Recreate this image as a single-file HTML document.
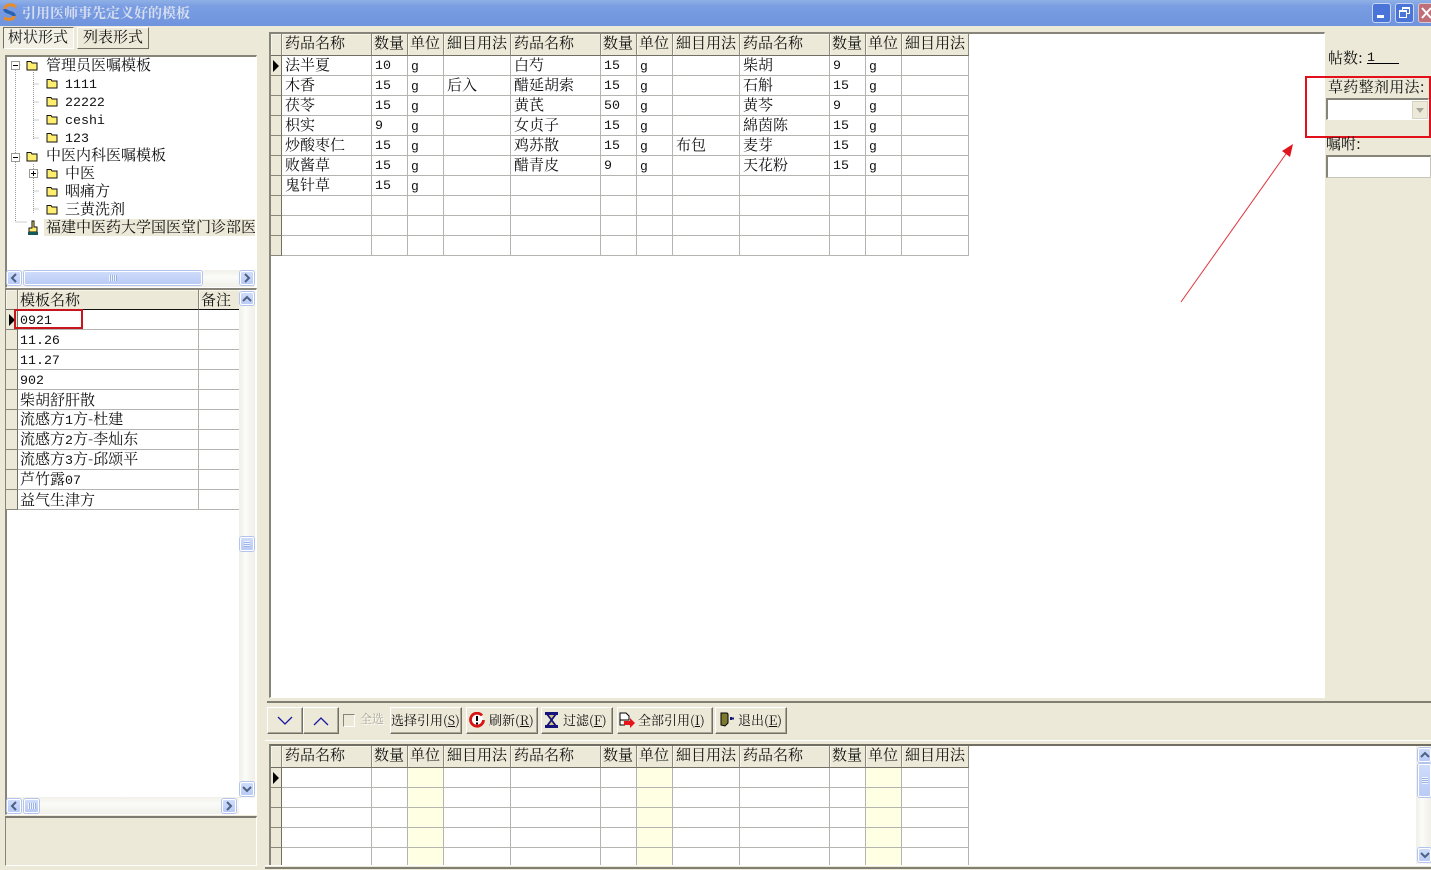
<!DOCTYPE html>
<html lang="zh-CN"><head><meta charset="utf-8"><title>引用医师事先定义好的模板</title>
<style>
html,body{margin:0;padding:0}
body{width:1431px;height:870px;position:relative;overflow:hidden;background:#ece9d8;font:15px/20px "Noto Serif CJK SC","Liberation Serif",serif;color:#111}
.a{position:absolute;box-sizing:border-box}
.t{position:absolute;white-space:nowrap}
.n{font:13.3px/20px "Liberation Mono",monospace}
.white{background:#fff}
.sunk{border-top:2px solid #87847a;border-left:2px solid #87847a;border-right:1px solid #fff;border-bottom:1px solid #fff}
.btn{position:absolute;box-sizing:border-box;background:#ece9d8;border:1px solid;border-color:#fff #716f64 #716f64 #fff;box-shadow:inset -1px -1px 0 #aca899;white-space:nowrap;font-size:13px;line-height:23px}
.sb{position:absolute;box-sizing:border-box;background:linear-gradient(#cfdcfb,#b9cbf6);border:1px solid #fff;border-radius:2px;box-shadow:0 0 0 1px #b2c4ee;color:#4d6185}
.sb svg{position:absolute;left:0;top:0}
.tr{position:absolute;background:linear-gradient(90deg,#f0efe8,#fbfbf8 40%,#f0efe8)}
.trh{position:absolute;background:linear-gradient(#f1f0ea,#fbfbf8 40%,#f1f0ea)}
table{position:absolute;border-collapse:separate;border-spacing:0;table-layout:fixed}
td,th{box-sizing:border-box;height:20px;padding:0 0 0 3px;font-weight:400;text-align:left;border-right:1px solid #b4b4b0;border-bottom:1px solid #b4b4b0;overflow:hidden;white-space:nowrap;line-height:14px;vertical-align:middle}
th{height:21px;padding-bottom:2px;background:#ece9d8;border-right-color:#8a887c;border-bottom:1px solid #716f64;box-shadow:inset 1px 1px 0 #f8f6ea}
.b th{padding-bottom:3px}
.m th{height:22px;padding-bottom:4px}
.m td{padding-bottom:2px}
.m td.i{padding-bottom:0}
td.i{background:#ece9d8;border-right:1px solid #716f64;border-bottom:1px solid #8a887c;padding:0}
td.y{background:#ffffe3}
td .n{line-height:12px}
.arrow{display:block;margin-left:2px;width:0;height:0;border-left:6px solid #000;border-top:6px solid transparent;border-bottom:6px solid transparent}
.g{position:relative;top:0;font:13px/10px "Liberation Mono",monospace}
</style></head><body>
<svg width="0" height="0" style="position:absolute"><defs>
<symbol id="f" viewBox="0 0 12 11"><path d="M1 3V1.500h4L6 3h5v7H1z" fill="#ffee70" stroke="#111" stroke-width="1"/></symbol>
<symbol id="up" viewBox="0 0 14 14"><path d="M3 9l4-4 4 4" fill="none" stroke="#4d6185" stroke-width="2"/></symbol>
<symbol id="dn" viewBox="0 0 14 14"><path d="M3 5l4 4 4-4" fill="none" stroke="#4d6185" stroke-width="2"/></symbol>
<symbol id="lf" viewBox="0 0 14 14"><path d="M9 3L5 7l4 4" fill="none" stroke="#4d6185" stroke-width="2"/></symbol>
<symbol id="rt" viewBox="0 0 14 14"><path d="M5 3l4 4-4 4" fill="none" stroke="#4d6185" stroke-width="2"/></symbol>
</defs></svg>

<!-- Title bar -->
<div class="a" style="left:0;top:0;width:1431px;height:26px;background:linear-gradient(#8fb0e6,#7a9de2 25%,#6f94de)"></div>
<svg class="a" style="left:2px;top:3px" width="16" height="18" viewBox="0 0 16 18"><path d="M14 4C9 0 3 2 3 6" fill="none" stroke="#e88b2a" stroke-width="3"/><path d="M3 6c0 4 9 3 9 7" fill="none" stroke="#2a62b0" stroke-width="3.500"/><path d="M12 13c0 4-6 4-10 2" fill="none" stroke="#e88b2a" stroke-width="3"/></svg>
<div class="t" style="left:22px;top:2px;font-size:14px;font-weight:700;color:#d6def0;line-height:22px;letter-spacing:0">引用医师事先定义好的模板</div>
<div class="a" style="left:1372px;top:3px;width:19px;height:20px;background:#4a74d8;border:1px solid #c8d6f2;border-radius:3px"><div class="a" style="left:4px;top:11px;width:7px;height:3px;background:#fff"></div></div>
<div class="a" style="left:1395px;top:3px;width:19px;height:20px;background:#4a74d8;border:1px solid #c8d6f2;border-radius:3px"><div class="a" style="left:6px;top:3px;width:8px;height:7px;border:1px solid #fff;border-top-width:2px"></div><div class="a" style="left:3px;top:6px;width:8px;height:8px;border:1px solid #fff;border-top-width:2px;background:#4a74d8"></div></div>
<div class="a" style="left:1418px;top:3px;width:14px;height:20px;background:#bf6f78;border:1px solid #d8c6d2;border-radius:3px 0 0 3px"><svg class="a" style="left:2px;top:3px" width="12" height="12"><path d="M1 1l9 10M10 1L1 11" stroke="#fff" stroke-width="2"/></svg></div>

<!-- Tabs -->
<div class="a" style="left:3px;top:27px;width:71px;height:22px;border:1px solid;border-color:#716f64 #fff #fff #716f64;background:#f3f1e6"></div>
<div class="t" style="left:8px;top:27px">树状形式</div>
<div class="a" style="left:77px;top:27px;width:72px;height:22px;border:1px solid;border-color:#fff #716f64 #716f64 #fff"></div>
<div class="t" style="left:83px;top:27px">列表形式</div>

<!-- Tree panel -->
<div class="a white sunk" style="left:5px;top:55px;width:252px;height:233px"></div>
<svg class="a" style="left:10px;top:60px" width="60" height="175">
<path d="M5.500 10v152M5.500 162h12M5.500 5h6M5.500 97h6M23.500 12v67M23.500 24h6M23.500 42h6M23.500 60h6M23.500 78h6M23.500 104v49M23.500 113h6M23.500 131h6M23.500 149h6" stroke="#999" stroke-dasharray="1 1" fill="none"/>
<g fill="#fff" stroke="#9a9a92"><rect x="1.500" y="1.500" width="8" height="8"/><rect x="1.500" y="93.500" width="8" height="8"/><rect x="19.500" y="109.500" width="8" height="8"/></g>
<path d="M3 5.500h5M3 97.500h5M21 113.500h5M23.500 111v5" stroke="#000"/>
</svg>
<svg class="a" style="left:26px;top:60px" width="12" height="11"><use href="#f"/></svg>
<div class="t" style="left:46px;top:55px">管理员医嘱模板</div>
<svg class="a" style="left:46px;top:78px" width="12" height="11"><use href="#f"/></svg><div class="t n" style="left:65px;top:75px">1111</div>
<svg class="a" style="left:46px;top:96px" width="12" height="11"><use href="#f"/></svg><div class="t n" style="left:65px;top:93px">22222</div>
<svg class="a" style="left:46px;top:114px" width="12" height="11"><use href="#f"/></svg><div class="t n" style="left:65px;top:111px">ceshi</div>
<svg class="a" style="left:46px;top:132px" width="12" height="11"><use href="#f"/></svg><div class="t n" style="left:65px;top:129px">123</div>
<svg class="a" style="left:26px;top:151px" width="12" height="11"><use href="#f"/></svg>
<div class="t" style="left:46px;top:145px">中医内科医嘱模板</div>
<svg class="a" style="left:46px;top:168px" width="12" height="11"><use href="#f"/></svg><div class="t" style="left:65px;top:163px">中医</div>
<svg class="a" style="left:46px;top:186px" width="12" height="11"><use href="#f"/></svg><div class="t" style="left:65px;top:181px">咽痛方</div>
<svg class="a" style="left:46px;top:204px" width="12" height="11"><use href="#f"/></svg><div class="t" style="left:65px;top:199px">三黄洗剂</div>
<svg class="a" style="left:27px;top:220px" width="12" height="16" viewBox="0 0 12 16"><path d="M5 1h2v6h3v5H2V8h3z" fill="#ffee70" stroke="#111"/><rect x="1" y="12" width="10" height="3" fill="#145a5a"/></svg>
<div class="a" style="left:44px;top:219px;width:211px;height:17px;background:#ece9d8"></div>
<div class="t" style="left:46px;top:217px;width:209px;overflow:hidden">福建中医药大学国医堂门诊部医</div>
<!-- Tree h-scroll -->
<div class="trh" style="left:7px;top:270px;width:248px;height:17px"></div>
<div class="sb" style="left:7px;top:271px;width:14px;height:14px"><svg width="14" height="14" style="left:-1px;top:-1px"><use href="#lf"/></svg></div>
<div class="sb" style="left:24px;top:271px;width:178px;height:14px"><div class="a" style="left:84px;top:3px;width:8px;height:6px;background:repeating-linear-gradient(90deg,#eef3fd 0 1px,#9db3e2 1px 2px)"></div></div>
<div class="sb" style="left:240px;top:271px;width:14px;height:14px"><svg width="14" height="14" style="left:-1px;top:-1px"><use href="#rt"/></svg></div>

<!-- Template grid -->
<div class="a white sunk" style="left:5px;top:288px;width:252px;height:527px"></div>
<table style="left:6px;top:290px;width:233px">
<colgroup><col style="width:12px"><col style="width:181px"><col style="width:40px"></colgroup>
<tr><th style="height:20px"></th><th style="height:20px;padding-left:2px;padding-bottom:0;border-bottom-color:#111">模板名称</th><th style="height:20px;padding-left:2px;padding-bottom:0;border-bottom-color:#111;border-right:0">备注</th></tr>
<tr><td class="i"><span class="arrow" style="margin-left:3px"></span></td><td style="padding-left:2px"><span class="n">0921</span></td><td style="border-right:0"></td></tr>
<tr><td class="i"></td><td style="padding-left:2px"><span class="n">11.26</span></td><td style="border-right:0"></td></tr>
<tr><td class="i"></td><td style="padding-left:2px"><span class="n">11.27</span></td><td style="border-right:0"></td></tr>
<tr><td class="i"></td><td style="padding-left:2px"><span class="n">902</span></td><td style="border-right:0"></td></tr>
<tr><td class="i"></td><td style="padding-left:2px">柴胡舒肝散</td><td style="border-right:0"></td></tr>
<tr><td class="i"></td><td style="padding-left:2px">流感方<span class="n">1</span>方-杜建</td><td style="border-right:0"></td></tr>
<tr><td class="i"></td><td style="padding-left:2px">流感方<span class="n">2</span>方-李灿东</td><td style="border-right:0"></td></tr>
<tr><td class="i"></td><td style="padding-left:2px">流感方<span class="n">3</span>方-邱颂平</td><td style="border-right:0"></td></tr>
<tr><td class="i"></td><td style="padding-left:2px">芦竹露<span class="n">07</span></td><td style="border-right:0"></td></tr>
<tr><td class="i"></td><td style="padding-left:2px">益气生津方</td><td style="border-right:0"></td></tr>
</table>
<div class="a" style="left:14px;top:309px;width:69px;height:20px;border:2px solid #c8141c"></div>
<!-- Template v-scroll -->
<div class="tr" style="left:239px;top:291px;width:16px;height:507px"></div>
<div class="sb" style="left:240px;top:292px;width:14px;height:13px"><svg width="14" height="14" style="left:-1px;top:-1px"><use href="#up"/></svg></div>
<div class="sb" style="left:240px;top:537px;width:14px;height:14px"><div class="a" style="left:3px;top:3px;width:6px;height:6px;background:repeating-linear-gradient(#eef3fd 0 1px,#9db3e2 1px 2px)"></div></div>
<div class="sb" style="left:240px;top:782px;width:14px;height:14px"><svg width="14" height="14" style="left:-1px;top:-1px"><use href="#dn"/></svg></div>
<div class="trh" style="left:7px;top:797px;width:232px;height:17px"></div>
<div class="sb" style="left:7px;top:799px;width:14px;height:14px"><svg width="14" height="14" style="left:-1px;top:-1px"><use href="#lf"/></svg></div>
<div class="sb" style="left:24px;top:799px;width:15px;height:14px"><div class="a" style="left:3px;top:3px;width:8px;height:6px;background:repeating-linear-gradient(90deg,#eef3fd 0 1px,#9db3e2 1px 2px)"></div></div>
<div class="sb" style="left:222px;top:799px;width:14px;height:14px"><svg width="14" height="14" style="left:-1px;top:-1px"><use href="#rt"/></svg></div>
<!-- Status panel -->
<div class="a" style="left:5px;top:816px;width:252px;height:50px;border:1px solid;border-top:2px solid #7d7b70;border-left-color:#87847a;border-right-color:#fff;border-bottom-color:#fff"></div>

<!-- Main top grid -->
<div class="a white sunk" style="left:269px;top:32px;width:1056px;height:666px"></div>
<table class="m" style="left:271px;top:34px;width:698px">
<colgroup><col style="width:11px"><col style="width:90px"><col style="width:36px"><col style="width:36px"><col style="width:67px"><col style="width:90px"><col style="width:36px"><col style="width:36px"><col style="width:67px"><col style="width:90px"><col style="width:36px"><col style="width:36px"><col style="width:67px"></colgroup>
<tr><th></th><th>药品名称</th><th style="padding-left:2px">数量</th><th style="padding-left:2px">单位</th><th>細目用法</th><th>药品名称</th><th style="padding-left:2px">数量</th><th style="padding-left:2px">单位</th><th>細目用法</th><th>药品名称</th><th style="padding-left:2px">数量</th><th style="padding-left:2px">单位</th><th>細目用法</th></tr>
<tr><td class="i"><span class="arrow"></span></td><td>法半夏</td><td><span class="n">10</span></td><td><span class="g">g</span></td><td></td><td>白芍</td><td><span class="n">15</span></td><td><span class="g">g</span></td><td></td><td>柴胡</td><td><span class="n">9</span></td><td><span class="g">g</span></td><td></td></tr>
<tr><td class="i"></td><td>木香</td><td><span class="n">15</span></td><td><span class="g">g</span></td><td>后入</td><td>醋延胡索</td><td><span class="n">15</span></td><td><span class="g">g</span></td><td></td><td>石斛</td><td><span class="n">15</span></td><td><span class="g">g</span></td><td></td></tr>
<tr><td class="i"></td><td>茯苓</td><td><span class="n">15</span></td><td><span class="g">g</span></td><td></td><td>黄芪</td><td><span class="n">50</span></td><td><span class="g">g</span></td><td></td><td>黄芩</td><td><span class="n">9</span></td><td><span class="g">g</span></td><td></td></tr>
<tr><td class="i"></td><td>枳实</td><td><span class="n">9</span></td><td><span class="g">g</span></td><td></td><td>女贞子</td><td><span class="n">15</span></td><td><span class="g">g</span></td><td></td><td>綿茵陈</td><td><span class="n">15</span></td><td><span class="g">g</span></td><td></td></tr>
<tr><td class="i"></td><td>炒酸枣仁</td><td><span class="n">15</span></td><td><span class="g">g</span></td><td></td><td>鸡苏散</td><td><span class="n">15</span></td><td><span class="g">g</span></td><td>布包</td><td>麦芽</td><td><span class="n">15</span></td><td><span class="g">g</span></td><td></td></tr>
<tr><td class="i"></td><td>败酱草</td><td><span class="n">15</span></td><td><span class="g">g</span></td><td></td><td>醋青皮</td><td><span class="n">9</span></td><td><span class="g">g</span></td><td></td><td>天花粉</td><td><span class="n">15</span></td><td><span class="g">g</span></td><td></td></tr>
<tr><td class="i"></td><td>鬼针草</td><td><span class="n">15</span></td><td><span class="g">g</span></td><td></td><td></td><td></td><td></td><td></td><td></td><td></td><td></td><td></td></tr>
<tr><td class="i"></td><td></td><td></td><td></td><td></td><td></td><td></td><td></td><td></td><td></td><td></td><td></td><td></td></tr>
<tr><td class="i"></td><td></td><td></td><td></td><td></td><td></td><td></td><td></td><td></td><td></td><td></td><td></td><td></td></tr>
<tr><td class="i"></td><td></td><td></td><td></td><td></td><td></td><td></td><td></td><td></td><td></td><td></td><td></td><td></td></tr>
</table>

<!-- Arrow -->
<svg class="a" style="left:1170px;top:135px" width="130" height="175"><path d="M11 167L118 16" stroke="#e0343a" stroke-width="1" fill="none"/><path d="M123 9l-3 13-8-6z" fill="#e0141c"/></svg>

<!-- Right panel -->
<div class="t" style="left:1328px;top:48px">帖数:</div>
<div class="t n" style="left:1367px;top:48px">1</div>
<div class="a" style="left:1367px;top:63px;width:32px;height:1px;background:#000"></div>
<div class="t" style="left:1328px;top:77px;letter-spacing:.3px">草药整剂用法:</div>
<div class="a white sunk" style="left:1326px;top:98px;width:103px;height:22px"></div>
<div class="a" style="left:1412px;top:101px;width:16px;height:18px;background:#ece9d8;border:1px solid #d6d3c4"><div class="a" style="left:3px;top:6px;border-top:5px solid #a8a69a;border-left:4px solid transparent;border-right:4px solid transparent"></div></div>
<div class="a" style="left:1305px;top:76px;width:126px;height:62px;border:2px solid #e2101a"></div>
<div class="t" style="left:1326px;top:134px">嘱咐:</div>
<div class="a white" style="left:1326px;top:155px;width:105px;height:23px;border:1px solid #c8c6ba;border-top:2px solid #87847a;border-left:2px solid #87847a"></div>

<!-- Splitter line -->
<div class="a" style="left:267px;top:701px;width:1164px;height:2px;background:#817f72"></div>
<!-- Toolbar -->
<div class="btn" style="left:267px;top:707px;width:36px;height:27px"><svg class="a" style="left:8px;top:7px" width="18" height="12"><path d="M2 2l7 7 7-7" fill="none" stroke="#1818a0" stroke-width="1.300"/></svg></div>
<div class="btn" style="left:303px;top:707px;width:36px;height:27px"><svg class="a" style="left:8px;top:7px" width="18" height="12"><path d="M2 10l7-7 7 7" fill="none" stroke="#1818a0" stroke-width="1.300"/></svg></div>
<div class="a" style="left:343px;top:714px;width:12px;height:13px;border:1px solid #9a988c;border-color:#85837a #fff #fff #85837a;background:#ece9d8"></div>
<div class="t" style="left:360px;top:709px;font-size:12px;color:#aca899;text-shadow:1px 1px 0 #fff">全选</div>
<div class="btn" style="left:390px;top:707px;width:72px;height:27px;padding-left:0;font-size:13px">选择引用(<u>S</u>)</div>
<div class="btn" style="left:466px;top:707px;width:72px;height:27px;padding-left:22px">刷新(<u>R</u>)</div>
<svg class="a" style="left:469px;top:712px" width="16" height="16"><path d="M13 3.500A6.500 6.500 0 1 0 14.500 8" fill="#fff" stroke="#d81414" stroke-width="2.800"/><path d="M8 4v5M8 10.500v2" stroke="#000" stroke-width="2"/></svg>
<div class="btn" style="left:541px;top:707px;width:72px;height:27px;padding-left:21px">过滤(<u>F</u>)</div>
<svg class="a" style="left:544px;top:712px" width="15" height="16"><path d="M5 3h5L7.500 8zM7.500 8L12 14H3z" fill="#d8c080"/><path d="M1 1.500h13M1 14.500h13" stroke="#14147a" stroke-width="3"/><path d="M3 2l9 12M12 2L3 14" stroke="#14147a" stroke-width="1.800"/></svg>
<div class="btn" style="left:617px;top:707px;width:96px;height:27px;padding-left:20px">全部引用(<u>I</u>)</div>
<svg class="a" style="left:619px;top:712px" width="17" height="16"><path d="M1 1h6l3 3v4H1z" fill="#fff" stroke="#000"/><path d="M1 8v5h5" fill="#fff" stroke="#000"/><path d="M5 9h6V6l5 5-5 5v-3H5z" fill="#e8141c"/></svg>
<div class="btn" style="left:715px;top:707px;width:72px;height:27px;padding-left:22px">退出(<u>E</u>)</div>
<svg class="a" style="left:719px;top:712px" width="16" height="16"><path d="M2 1h6l1 1v9l-3 3-4-1z" fill="#7d7a30" stroke="#000"/><path d="M11 6.500h4M12 5v3" stroke="#14147a" stroke-width="2"/></svg>

<!-- Bottom grid -->
<div class="a" style="left:265px;top:740px;width:1166px;height:1px;background:#fff"></div>
<div class="a white" style="left:269px;top:744px;width:1162px;height:121px;border-top:2px solid #716f64;border-left:2px solid #87847a"></div>
<div class="a b" style="left:271px;top:746px;width:698px;height:119px;overflow:hidden">
<table style="left:0;top:0;width:698px">
<colgroup><col style="width:11px"><col style="width:90px"><col style="width:36px"><col style="width:36px"><col style="width:67px"><col style="width:90px"><col style="width:36px"><col style="width:36px"><col style="width:67px"><col style="width:90px"><col style="width:36px"><col style="width:36px"><col style="width:67px"></colgroup>
<tr><th style="height:22px"></th><th style="height:22px">药品名称</th><th style="height:22px;padding-left:2px">数量</th><th style="padding-left:2px">单位</th><th>細目用法</th><th>药品名称</th><th style="padding-left:2px">数量</th><th style="padding-left:2px">单位</th><th>細目用法</th><th>药品名称</th><th style="padding-left:2px">数量</th><th style="padding-left:2px">单位</th><th>細目用法</th></tr>
<tr><td class="i"><span class="arrow"></span></td><td></td><td></td><td class="y"></td><td></td><td></td><td></td><td class="y"></td><td></td><td></td><td></td><td class="y"></td><td></td></tr>
<tr><td class="i"></td><td></td><td></td><td class="y"></td><td></td><td></td><td></td><td class="y"></td><td></td><td></td><td></td><td class="y"></td><td></td></tr>
<tr><td class="i"></td><td></td><td></td><td class="y"></td><td></td><td></td><td></td><td class="y"></td><td></td><td></td><td></td><td class="y"></td><td></td></tr>
<tr><td class="i"></td><td></td><td></td><td class="y"></td><td></td><td></td><td></td><td class="y"></td><td></td><td></td><td></td><td class="y"></td><td></td></tr>
<tr><td class="i"></td><td></td><td></td><td class="y"></td><td></td><td></td><td></td><td class="y"></td><td></td><td></td><td></td><td class="y"></td><td></td></tr>
</table></div>
<div class="tr" style="left:1416px;top:746px;width:15px;height:118px"></div>
<div class="sb" style="left:1418px;top:748px;width:13px;height:14px"><svg width="14" height="14" style="left:-1px;top:-1px"><use href="#up"/></svg></div>
<div class="sb" style="left:1418px;top:764px;width:13px;height:33px"><div class="a" style="left:3px;top:12px;width:6px;height:7px;background:repeating-linear-gradient(#eef3fd 0 1px,#9db3e2 1px 2px)"></div></div>
<div class="sb" style="left:1418px;top:848px;width:13px;height:14px"><svg width="14" height="14" style="left:-1px;top:-1px"><use href="#dn"/></svg></div>
<div class="a" style="left:265px;top:867px;width:1166px;height:2px;background:#817f72"></div>
<div class="a" style="left:265px;top:865px;width:1166px;height:1px;background:#fff"></div>
</body></html>
